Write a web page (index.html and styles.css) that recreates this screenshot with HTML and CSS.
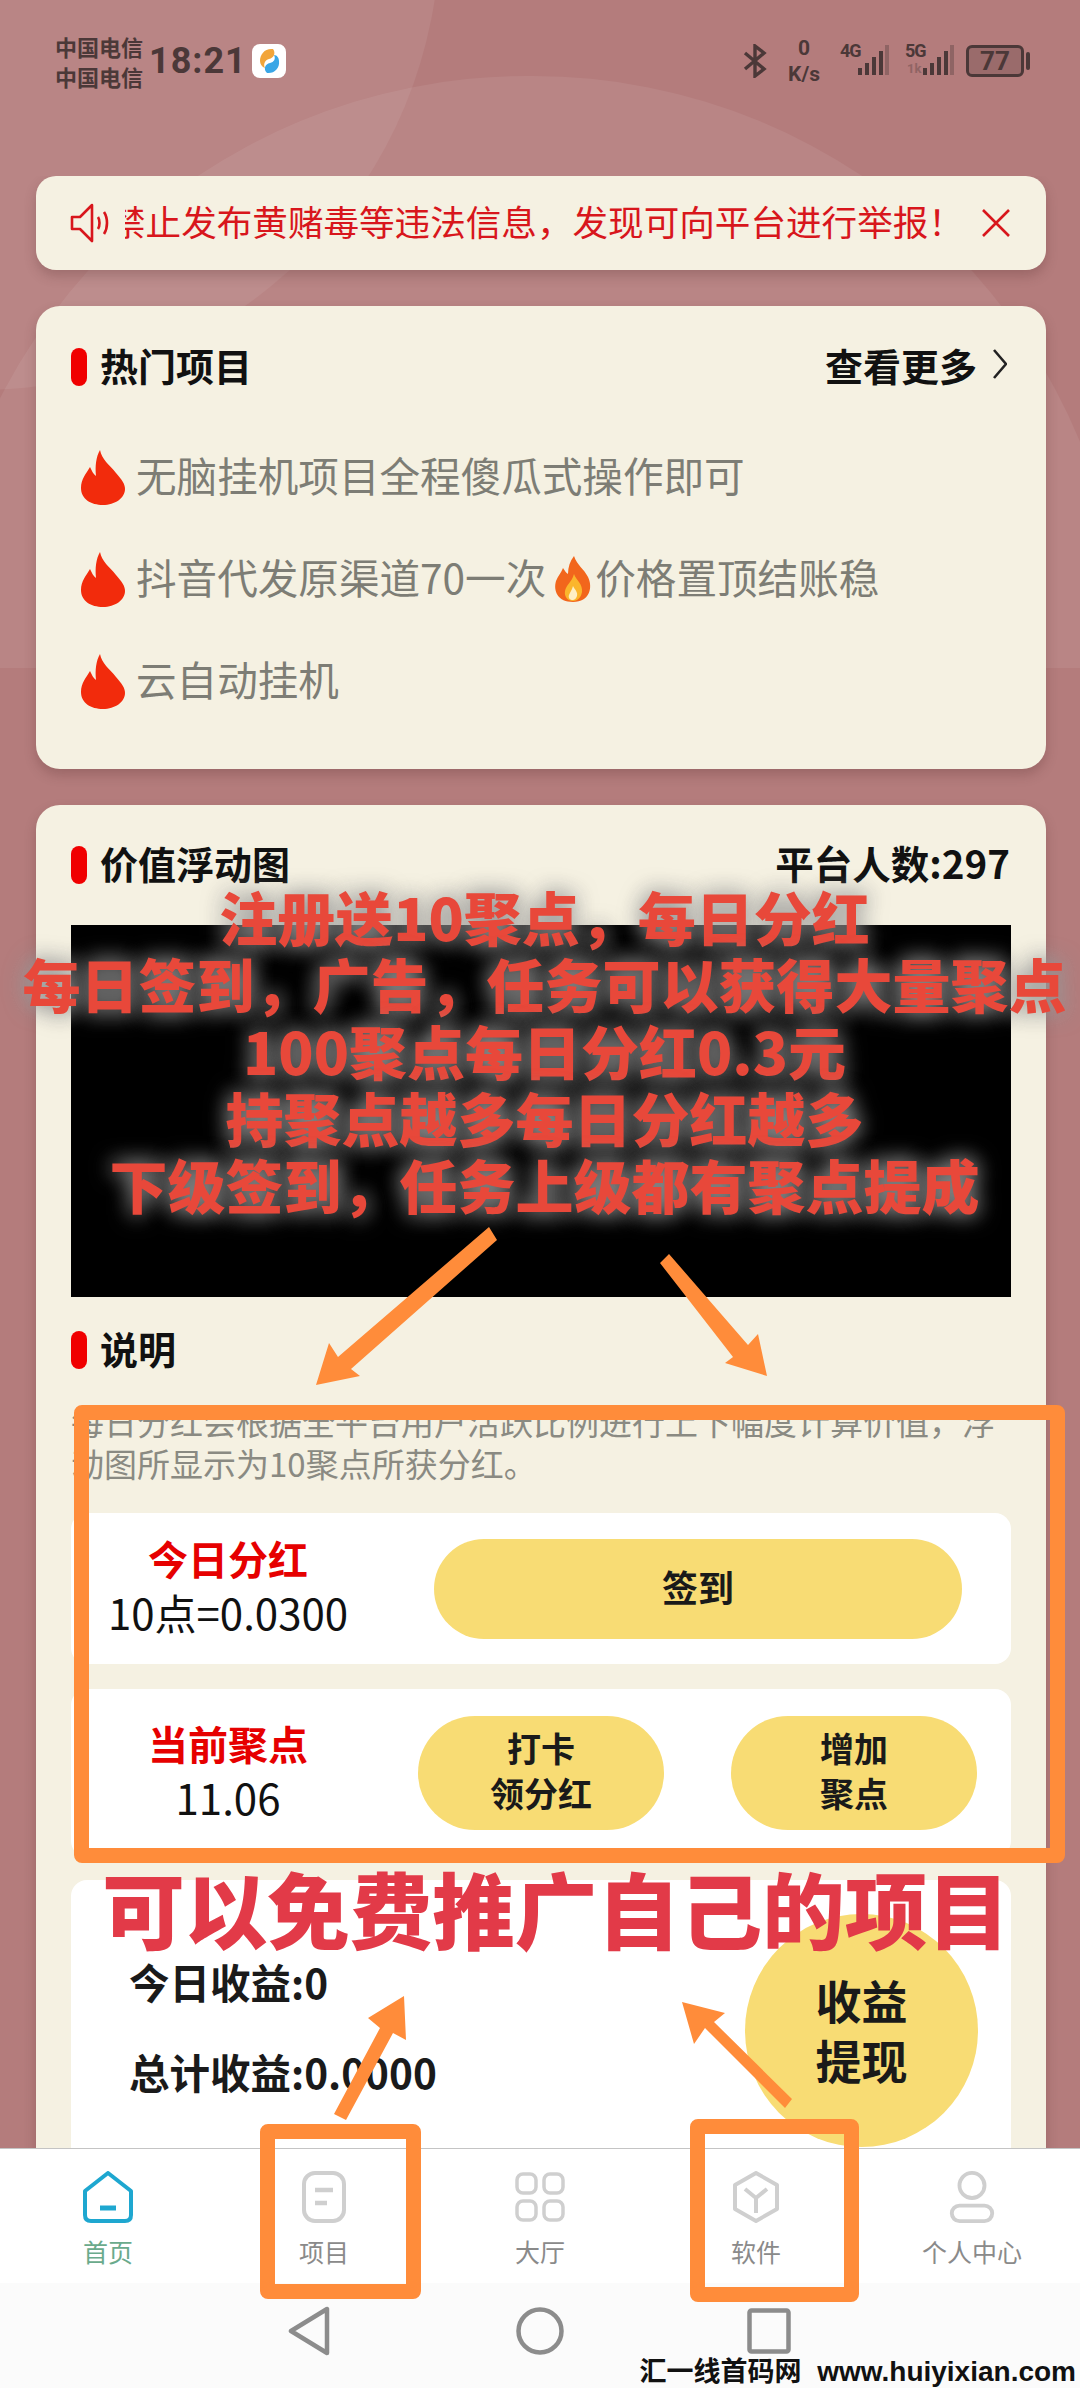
FILE: index.html
```html
<!DOCTYPE html>
<html lang="zh-CN">
<head>
  <meta charset="UTF-8">
  <meta name="viewport" content="width=device-width, initial-scale=1.0">
  <title>首页</title>
  <link rel="stylesheet" href="styles.css">
</head>
<body>
  <svg class="defs" width="0" height="0">
    <defs>
      <path id="flame" d="M19 0C21 10 28 14 35 23C41 30 44 34 44 39C44 48 34 55 22 55C10 55 0 49 0 38C0 29 5 24 9 17C11 21 12 24 15 26C14 16 15 7 19 0Z"/>
    </defs>
  </svg>

  <div class="page">
    <div class="bg-arc bg-arc-left"></div>
    <div class="bg-arc bg-arc-main"></div>

    <div class="status-bar">
      <div class="status-left">
        <div class="carriers">
          <span>中国电信</span>
          <span>中国电信</span>
        </div>
        <div class="clock">18:21</div>
        <div class="app-icon">
          <svg width="34" height="34" viewBox="0 0 34 34">
            <path d="M21 5C13 4 8 10 8 17C8 20 10 23 13 24C11 20 13 16 17 15C22 14 24 9 21 5Z" fill="#f2a53a"/>
            <path d="M15 29C22 30 28 24 27 17C27 14 25 11 22 11C24 15 22 18 18 19C13 20 11 25 15 29Z" fill="#3aa6e6"/>
          </svg>
        </div>
      </div>
      <div class="status-right">
        <svg class="bt-icon" width="24" height="34" viewBox="0 0 24 34" fill="none" stroke="#4b3838" stroke-width="3.4">
          <path d="M2 9L21 25L12 32V2L21 9L2 25"/>
        </svg>
        <div class="speed">
          <span>0</span>
          <span>K/s</span>
        </div>
        <div class="signal">
          <span class="net-label">4G</span>
          <svg width="32" height="30" viewBox="0 0 32 30" fill="#4b3838">
            <rect x="1" y="23" width="4" height="7"/>
            <rect x="8" y="18" width="4" height="12"/>
            <rect x="15" y="12" width="4" height="18"/>
            <rect x="22" y="6" width="4" height="24"/>
            <rect x="28" y="0" width="4" height="30" opacity=".35"/>
          </svg>
        </div>
        <div class="signal">
          <span class="net-label">5G</span>
          <span class="net-sub">1k</span>
          <svg width="32" height="30" viewBox="0 0 32 30" fill="#4b3838">
            <rect x="1" y="23" width="4" height="7"/>
            <rect x="8" y="18" width="4" height="12"/>
            <rect x="15" y="12" width="4" height="18"/>
            <rect x="22" y="6" width="4" height="24"/>
            <rect x="28" y="0" width="4" height="30" opacity=".35"/>
          </svg>
        </div>
        <div class="battery">
          <div class="battery-body">77</div>
          <div class="battery-nub"></div>
        </div>
      </div>
    </div>

    <div class="content">
      <div class="notice">
        <svg class="notice-icon" width="40" height="40" viewBox="0 0 40 40" fill="none" stroke="#d8161c" stroke-width="2.6">
          <path d="M2 14V26H10L22 38V2L10 14Z" stroke-linejoin="round"/>
          <path d="M28 14C30 17 30 23 28 26"/>
          <path d="M34 9C38 15 38 25 34 31"/>
        </svg>
        <div class="notice-window">
          <div class="notice-text">禁止发布黄赌毒等违法信息，发现可向平台进行举报！</div>
        </div>
        <svg class="notice-close" width="28" height="28" viewBox="0 0 28 28" stroke="#d8161c" stroke-width="2.6">
          <path d="M1 1L27 27M27 1L1 27"/>
        </svg>
      </div>

      <section class="card hot-card">
        <div class="card-head">
          <h2 class="card-title">热门项目</h2>
          <div class="head-link">
            查看更多
            <svg width="14" height="32" viewBox="0 0 14 32" fill="none" stroke="#222" stroke-width="2.6">
              <path d="M1 2L13 16L1 30"/>
            </svg>
          </div>
        </div>
        <ul class="hot-list">
          <li class="hot-item">
            <svg class="flame" width="44" height="55" viewBox="0 0 44 55"><use href="#flame"/></svg>
            <span>无脑挂机项目全程傻瓜式操作即可</span>
          </li>
          <li class="hot-item">
            <svg class="flame" width="44" height="55" viewBox="0 0 44 55"><use href="#flame"/></svg>
            <span>抖音代发原渠道70一次</span>
            <svg class="flame-small" width="40" height="46" viewBox="0 0 40 46">
              <path d="M21 0C24 9 31 13 35 21C40 31 37 46 20 46C5 46 0 35 3 25C5 20 8 17 10 12C12 15 13 17 15 18C15 11 17 5 21 0Z" fill="#f2661c"/>
              <path d="M21 18C23 24 30 28 29 36C28 42 24 45 20 45C15 45 11 41 12 35C13 29 19 26 21 18Z" fill="#fbb62c"/>
              <path d="M20 30C22 34 25 36 24 40C23 43 21 44 20 44C17 44 15 42 16 39C17 36 19 34 20 30Z" fill="#fff0c4"/>
            </svg>
            <span>价格置顶结账稳</span>
          </li>
          <li class="hot-item">
            <svg class="flame" width="44" height="55" viewBox="0 0 44 55"><use href="#flame"/></svg>
            <span>云自动挂机</span>
          </li>
        </ul>
      </section>

      <section class="card value-card">
        <div class="card-head">
          <h2 class="card-title">价值浮动图</h2>
          <div class="head-link">平台人数:297</div>
        </div>
        <div class="chart"></div>
        <div class="card-head desc-head">
          <h2 class="card-title">说明</h2>
        </div>
        <p class="desc">每日分红会根据全平台用户活跃比例进行上下幅度计算价值，浮动图所显示为10聚点所获分红。</p>

        <div class="panel">
          <div class="stat">
            <div class="stat-label">今日分红</div>
            <div class="stat-value">10点=0.0300</div>
          </div>
          <button class="pill-btn sign-btn">签到</button>
        </div>

        <div class="panel panel-tall">
          <div class="stat">
            <div class="stat-label">当前聚点</div>
            <div class="stat-value">11.06</div>
          </div>
          <button class="pill-btn small-btn">打卡<br>领分红</button>
          <button class="pill-btn small-btn small-btn-last">增加<br>聚点</button>
        </div>

        <div class="panel panel-earn">
          <div class="earn-list">
            <div>今日收益:0</div>
            <div>总计收益:0.0000</div>
          </div>
          <button class="withdraw-btn">收益<br>提现</button>
        </div>
      </section>
    </div>

    <nav class="tabbar">
      <div class="tab tab-active">
        <svg width="50" height="52" viewBox="0 0 50 52" fill="none" stroke="#1ea7d0" stroke-width="4">
          <path d="M25 2L48 20V44Q48 50 42 50H8Q2 50 2 44V20Z" stroke-linejoin="round"/>
          <path d="M17 37H33" stroke-width="5"/>
        </svg>
        <span>首页</span>
      </div>
      <div class="tab">
        <svg width="44" height="52" viewBox="0 0 44 52" fill="none" stroke="#cfcfcf" stroke-width="4">
          <rect x="2" y="2" width="40" height="48" rx="11"/>
          <path d="M13 19H31M13 32H25" stroke-width="4.5"/>
        </svg>
        <span>项目</span>
      </div>
      <div class="tab">
        <svg width="50" height="50" viewBox="0 0 50 50" fill="none" stroke="#cfcfcf" stroke-width="3.5">
          <rect x="2" y="2" width="19" height="19" rx="6"/>
          <rect x="29" y="2" width="19" height="19" rx="6"/>
          <rect x="2" y="29" width="19" height="19" rx="6"/>
          <rect x="29" y="29" width="19" height="19" rx="6"/>
        </svg>
        <span>大厅</span>
      </div>
      <div class="tab">
        <svg width="46" height="52" viewBox="0 0 46 52" fill="none" stroke="#cfcfcf" stroke-width="4">
          <path d="M23 2L44 14V38L23 50L2 38V14Z" stroke-linejoin="round"/>
          <path d="M12 18L23 27L34 18M23 27V42"/>
        </svg>
        <span>软件</span>
      </div>
      <div class="tab">
        <svg width="46" height="54" viewBox="0 0 46 54" fill="none" stroke="#cfcfcf" stroke-width="4">
          <ellipse cx="23" cy="15" rx="13" ry="13"/>
          <rect x="2" y="36" width="42" height="16" rx="8"/>
        </svg>
        <span>个人中心</span>
      </div>
    </nav>

    <div class="system-bar">
      <svg width="42" height="50" viewBox="0 0 42 50" fill="none" stroke="#8c8c8c" stroke-width="4.5">
        <path d="M39 3V47L3 25Z" stroke-linejoin="round"/>
      </svg>
      <svg class="sys-home" width="48" height="50" viewBox="0 0 48 50" fill="none" stroke="#8c8c8c" stroke-width="4.5">
        <circle cx="24" cy="25" r="21.5"/>
      </svg>
      <svg class="sys-recent" width="44" height="46" viewBox="0 0 44 46" fill="none" stroke="#8c8c8c" stroke-width="4.5">
        <rect x="2.5" y="2.5" width="39" height="41" rx="2"/>
      </svg>
    </div>

    <!-- annotations drawn on top of the screenshot -->
    <div class="promo-lines">
      <div class="promo-line">注册送10聚点，每日分红</div>
      <div class="promo-line">每日签到，广告，任务可以获得大量聚点</div>
      <div class="promo-line">100聚点每日分红0.3元</div>
      <div class="promo-line">持聚点越多每日分红越多</div>
      <div class="promo-line">下级签到，任务上级都有聚点提成</div>
    </div>
    <div class="promo-big">可以免费推广自己的项目</div>

    <div class="mark mark-main"></div>
    <div class="mark mark-tab-a"></div>
    <div class="mark mark-tab-b"></div>

    <svg class="arrows" width="1080" height="2388" viewBox="0 0 1080 2388" fill="#ff8c3a">
      <polygon points="489,1227 497,1240 351,1369 360,1376 316,1385 329,1343 338,1357"/>
      <polygon points="669,1254 660,1263 733,1357 725,1363 767,1376 758,1334 748,1345"/>
      <polygon points="334,2114 346,2120 393,2033 406,2040 404,1996 368,2018 380,2028"/>
      <polygon points="792,2099 785,2108 705,2028 694,2044 682,2002 725,2013 714,2022"/>
    </svg>

    <div class="watermark"><span>汇一线首码网</span> www.huiyixian.com</div>
  </div>
</body>
</html>
```

FILE: styles.css
```css
* {
  margin: 0;
  padding: 0;
  box-sizing: border-box;
}

body {
  font-family: "Noto Sans CJK SC", "Noto Sans", sans-serif;
  background: #b47c7c;
}

.defs {
  position: absolute;
}

.page {
  position: relative;
  width: 1080px;
  height: 2388px;
  overflow: hidden;
  display: flex;
  flex-direction: column;
  background: #b47c7c;
}

.bg-arc {
  position: absolute;
  background: rgba(255, 255, 255, 0.07);
}

.bg-arc-left {
  left: -480px;
  top: -530px;
  width: 920px;
  height: 920px;
  border-radius: 50%;
}

.bg-arc-main {
  left: -65px;
  top: 76px;
  width: 1190px;
  height: 592px;
  border-radius: 595px 595px 0 0;
}

/* status bar */
.status-bar {
  position: relative;
  height: 176px;
  flex-shrink: 0;
  display: flex;
  justify-content: space-between;
  align-items: flex-start;
  padding: 31px 50px 0 55px;
  color: #4b3838;
}

.status-left,
.status-right {
  display: flex;
  align-items: center;
}

.status-left {
  height: 60px;
}

.carriers {
  display: flex;
  flex-direction: column;
  font-size: 22px;
  line-height: 30px;
  font-weight: 700;
  width: 94px;
}

.clock {
  font-family: "Roboto", sans-serif;
  font-size: 36px;
  font-weight: 700;
  letter-spacing: 1px;
  width: 103px;
}

.app-icon {
  width: 34px;
  height: 34px;
  background: #fff;
  border-radius: 8px;
}

.status-right {
  height: 60px;
}

.speed {
  display: flex;
  flex-direction: column;
  align-items: center;
  width: 40px;
  margin-left: 17px;
  font-family: "Roboto", sans-serif;
  font-size: 21px;
  font-weight: 700;
  line-height: 26px;
}

.signal {
  position: relative;
  display: flex;
  align-items: flex-start;
  margin-left: 16px;
  padding-left: 17px;
  height: 32px;
}

.net-label {
  position: absolute;
  left: 0;
  top: -4px;
  font-family: "Roboto", sans-serif;
  font-size: 18px;
  font-weight: 700;
  letter-spacing: -1px;
  line-height: 20px;
}

.net-sub {
  position: absolute;
  left: 2px;
  top: 17px;
  font-family: "Roboto", sans-serif;
  font-size: 13px;
  font-weight: 700;
  line-height: 14px;
  opacity: 0.35;
}

.battery {
  display: flex;
  align-items: center;
  margin-left: 12px;
}

.battery-body {
  width: 58px;
  height: 32px;
  border: 3px solid #4b3838;
  border-radius: 6px;
  background: rgba(75, 56, 56, 0.25);
  font-family: "Roboto", sans-serif;
  font-size: 26px;
  font-weight: 700;
  line-height: 26px;
  text-align: center;
}

.battery-nub {
  width: 4px;
  height: 18px;
  margin-left: 2px;
  background: #4b3838;
  border-radius: 2px;
}

/* scrolling content */
.content {
  position: relative;
  flex: 1;
  min-height: 0;
  overflow: hidden;
  padding: 0 34px 0 36px;
}

.notice {
  display: flex;
  align-items: center;
  height: 94px;
  padding: 0 36px 0 34px;
  background: #f5f1e2;
  border-radius: 20px;
  box-shadow: 0 6px 12px rgba(80, 40, 40, 0.25);
  color: #d8161c;
}

.notice-window {
  width: 840px;
  margin-left: 15px;
  overflow: hidden;
}

.notice-text {
  margin-left: -15px;
  padding-bottom: 4px;
  font-size: 35.6px;
  line-height: 48px;
  white-space: nowrap;
}

.notice-close {
  margin-left: 17px;
  flex-shrink: 0;
}

.card {
  background: #f5f1e2;
  border-radius: 24px;
  box-shadow: 0 6px 12px rgba(80, 40, 40, 0.25);
  padding: 38px 35px 0;
}

.hot-card {
  height: 463px;
  margin-top: 36px;
  padding-top: 39px;
}

.value-card {
  margin-top: 36px;
  height: 1500px;
}

.card-head {
  display: flex;
  justify-content: space-between;
  align-items: center;
  height: 38px;
}

.card-title {
  display: flex;
  align-items: center;
  font-size: 38px;
  font-weight: 700;
  color: #111;
}

.card-title::before {
  content: "";
  width: 16px;
  height: 38px;
  margin: 6px 13px 0 0;
  background: #f00000;
  border-radius: 8px;
}

.head-link {
  display: flex;
  align-items: center;
  gap: 16px;
  font-size: 38px;
  font-weight: 700;
  color: #111;
}

.hot-card .head-link {
  padding-right: 4px;
}

.value-card .head-link {
  padding-right: 1px;
  font-size: 38.5px;
}

.hot-list {
  list-style: none;
  margin-top: 43px;
  padding-left: 10px;
}

.hot-item {
  display: flex;
  align-items: center;
  height: 102px;
  font-size: 40.6px;
  color: #7d7d75;
  white-space: nowrap;
}

.hot-item span {
  margin-bottom: 6px;
}

.flame {
  fill: #f22b0c;
  margin-right: 11px;
  flex-shrink: 0;
}

.flame-small {
  margin: 0 2px 0 7px;
  flex-shrink: 0;
}

.chart {
  height: 372px;
  margin-top: 44px;
  background: #000;
}

.desc-head {
  margin-top: 31px;
}

.desc {
  margin-top: 34px;
  font-size: 33px;
  line-height: 42px;
  color: #8a8a82;
}

.panel {
  display: flex;
  align-items: center;
  background: #fff;
  border-radius: 16px;
}

.value-card .panel {
  height: 151px;
  margin-top: 29px;
}

.value-card .panel-tall {
  height: 168px;
  margin-top: 25px;
}

.value-card .panel-earn {
  height: 400px;
  margin-top: 23px;
  align-items: flex-start;
  padding: 34px 33px 0 58px;
  justify-content: space-between;
}

.stat {
  width: 314px;
  flex-shrink: 0;
  margin-bottom: 7px;
  text-align: center;
}

.stat-label {
  font-size: 40px;
  line-height: 54px;
  font-weight: 700;
  color: #e60000;
}

.stat-value {
  font-size: 42px;
  line-height: 54px;
  color: #111;
}

.pill-btn {
  border: none;
  background: #f8dc74;
  font-family: inherit;
  font-weight: 700;
  color: #1a1a1a;
  padding-bottom: 6px;
}

.sign-btn {
  width: 528px;
  height: 100px;
  margin-left: 49px;
  border-radius: 50px;
  font-size: 36px;
}

.small-btn {
  width: 246px;
  height: 114px;
  margin-left: 33px;
  border-radius: 57px;
  font-size: 34px;
  line-height: 45px;
}

.small-btn-last {
  margin-left: 67px;
}

.earn-list {
  margin-top: 40px;
  display: flex;
  flex-direction: column;
  gap: 34px;
  font-size: 40.5px;
  line-height: 56px;
  font-weight: 700;
  color: #1a1a1a;
}

.withdraw-btn {
  width: 233px;
  height: 233px;
  border: none;
  border-radius: 50%;
  background: #f8dc74;
  font-family: inherit;
  font-size: 46px;
  line-height: 60px;
  font-weight: 700;
  color: #1a1a1a;
  padding-bottom: 3px;
}

/* bottom navigation */
.tabbar {
  position: relative;
  display: flex;
  height: 135px;
  flex-shrink: 0;
  padding-top: 22px;
  background: #fff;
  border-top: 1px solid #c4c4c4;
}

.tab {
  flex: 1;
  display: flex;
  flex-direction: column;
  align-items: center;
  font-size: 25px;
  color: #8a8a8a;
}

.tab svg {
  height: 52px;
}

.tab span {
  margin-top: 13px;
  line-height: 30px;
}

.tab-active {
  color: #6aaa8c;
}

.system-bar {
  position: relative;
  display: flex;
  align-items: center;
  height: 105px;
  flex-shrink: 0;
  padding: 0 0 9px 288px;
  background: #fbfbfb;
}

.sys-home {
  margin-left: 186px;
}

.sys-recent {
  margin-left: 183px;
}

/* annotations */
.promo-lines {
  position: absolute;
  left: 0;
  top: 883px;
  width: 1080px;
  padding-left: 9px;
  text-align: center;
}

.promo-line {
  height: 67px;
  font-size: 58px;
  line-height: 67px;
  font-weight: 900;
  color: #e8483a;
  white-space: nowrap;
  text-shadow: 0 0 22px rgba(150, 150, 150, 0.95), 0 0 22px rgba(150, 150, 150, 0.6);
}

.promo-big {
  position: absolute;
  left: 0;
  top: 1855px;
  width: 1080px;
  padding-left: 32px;
  text-align: center;
  font-size: 82.5px;
  line-height: 104px;
  font-weight: 900;
  color: #e23a48;
  white-space: nowrap;
}

.mark {
  position: absolute;
  border: 15px solid #ff8c3a;
  border-radius: 8px;
}

.mark-main {
  left: 74px;
  top: 1405px;
  width: 991px;
  height: 458px;
}

.mark-tab-a {
  left: 260px;
  top: 2124px;
  width: 161px;
  height: 175px;
}

.mark-tab-b {
  left: 690px;
  top: 2119px;
  width: 169px;
  height: 183px;
}

.arrows {
  position: absolute;
  left: 0;
  top: 0;
}

.watermark {
  position: absolute;
  right: 4px;
  bottom: 0;
  font-family: "Liberation Sans", sans-serif;
  font-size: 28px;
  line-height: 32px;
  font-weight: 700;
  color: #111;
  white-space: nowrap;
}

.watermark span {
  font-family: "Noto Sans CJK SC", sans-serif;
  font-size: 27px;
  margin-right: 8px;
}
```
